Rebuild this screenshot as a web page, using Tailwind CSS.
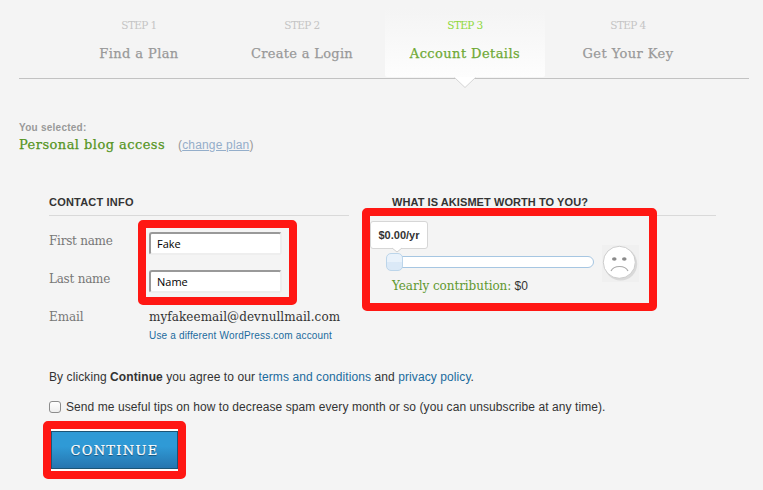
<!DOCTYPE html>
<html lang="en">
<head>
<meta charset="utf-8">
<title>Akismet – Account Details</title>
<script src="https://cdn.jsdelivr.net/npm/@tailwindcss/browser@4"></script>
</head>
<body class="bg-[#f4f4f4]">
<div class="relative w-[763px] h-[490px] overflow-hidden bg-[#f4f4f4] pl-[19px] font-['Liberation_Sans',Arial,sans-serif] text-[12px] text-[#333] whitespace-nowrap">

  <!-- Step navigation -->
  <nav class="flex gap-[3px] w-[730px] h-[79px] pl-[40px] pt-[8px] border-b border-[#c2c2c2] text-center font-['DejaVu_Serif',serif] text-[#999]">
    <div class="w-[160px] pt-[9px]">
      <div class="text-[10.5px] leading-[16px] tracking-[-0.6px] text-[#c4c4c4]">STEP 1</div>
      <div class="mt-[11px] text-[13px] leading-[20px] tracking-[0.4px] [-webkit-text-stroke:0.25px]">Find a Plan</div>
    </div>
    <div class="w-[160px] pt-[9px]">
      <div class="text-[10.5px] leading-[16px] tracking-[-0.6px] text-[#c4c4c4]">STEP 2</div>
      <div class="mt-[11px] text-[13px] leading-[20px] tracking-[0.3px] [-webkit-text-stroke:0.25px]">Create a Login</div>
    </div>
    <div class="relative w-[160px] h-[69px] pt-[9px] rounded-[2px] bg-linear-to-b from-[#f4f4f4] to-[#fdfdfd]">
      <div class="text-[10.5px] leading-[16px] tracking-[-0.6px] text-[#8fd83c]">STEP 3</div>
      <div class="mt-[11px] text-[13px] leading-[20px] tracking-[0.42px] [-webkit-text-stroke:0.25px] text-[#6fa935]">Account Details</div>
      <svg class="absolute left-[69px] top-[69px]" width="22" height="12" viewBox="0 0 22 12"><path d="M0 0H22L11 10.5Z" fill="#fff"/><path d="M.5 .5L11 10.5L21.5 .5" fill="none" stroke="#d4d4d4"/></svg>
    </div>
    <div class="w-[160px] pt-[9px]">
      <div class="text-[10.5px] leading-[16px] tracking-[-0.6px] text-[#c4c4c4]">STEP 4</div>
      <div class="mt-[11px] text-[13px] leading-[20px] tracking-[0.42px] [-webkit-text-stroke:0.25px]">Get Your Key</div>
    </div>
  </nav>

  <!-- Selected plan -->
  <section class="pt-[42px] h-[116px]">
    <div class="text-[10px] leading-[14px] font-bold tracking-[0.25px] text-[#999]">You selected:</div>
    <div class="flex leading-[20px]">
      <div class="w-[159px] font-['DejaVu_Serif',serif] text-[13px] tracking-[0.45px] [-webkit-text-stroke:0.25px] text-[#56951f]">Personal blog access</div>
      <div class="tracking-[0.17px] text-[#999]">(<a class="underline text-[#94aeca]">change plan</a>)</div>
    </div>
  </section>

  <div class="flex pl-[30px] h-[169px]">
    <!-- Contact info -->
    <section class="w-[300px] mr-[43px]">
      <h2 class="h-[21px] border-b border-[#d9d9d9] text-[11px] leading-[15px] font-bold tracking-[0.2px]">CONTACT INFO</h2>
      <div class="flex mt-[15px] h-[38px]">
        <label class="w-[100px] font-['DejaVu_Serif',serif] text-[12px] leading-[20px] tracking-[-0.25px] text-[#777]">First name</label>
        <div class="mt-[1px] w-[133px] h-[23px] rounded-[3px] border-2 border-t-[#999] border-l-[#999] border-r-[#eee] border-b-[#eee] bg-white pl-[6px] font-['Open_Sans',sans-serif] text-[11px] leading-[20px] text-black">Fake</div>
      </div>
      <div class="flex h-[38px]">
        <label class="w-[100px] font-['DejaVu_Serif',serif] text-[12px] leading-[20px] tracking-[-0.25px] text-[#777]">Last name</label>
        <div class="mt-[1px] w-[133px] h-[23px] rounded-[3px] border-2 border-t-[#999] border-l-[#999] border-r-[#eee] border-b-[#eee] bg-white pl-[6px] font-['Open_Sans',sans-serif] text-[11px] leading-[20px] text-black">Name</div>
      </div>
      <div class="flex">
        <div class="w-[100px] font-['DejaVu_Serif',serif] text-[12px] leading-[20px] tracking-[-0.1px] text-[#777]">Email</div>
        <div>
          <div class="font-['DejaVu_Serif',serif] text-[12px] leading-[20px] tracking-[0.06px]">myfakeemail@devnullmail.com</div>
          <a class="block mt-px text-[10px] leading-[16px] tracking-[0.18px] text-[#1b6b9d]">Use a different WordPress.com account</a>
        </div>
      </div>
    </section>

    <!-- Contribution -->
    <section class="w-[324px]">
      <h2 class="h-[21px] border-b border-[#d9d9d9] text-[11px] leading-[15px] font-bold tracking-[0.07px]">WHAT IS AKISMET WORTH TO YOU?</h2>
      <div class="flex">
        <div class="w-[210px] pt-[40px]">
          <div class="relative w-[202px] h-[12px] rounded-[6px] border border-[#a6c6e2] bg-white">
            <div class="absolute left-[-7px] top-[-4px] w-[17px] h-[18px] rounded-[5px] border border-[#bcd5ea] bg-linear-to-b from-[#e9f2fb] from-50% to-[#dbe9f7] to-50%"></div>
            <div class="absolute left-[-23px] top-[-36px] w-[58px] h-[28px] rounded-[3px] border border-[#d6d6d6] bg-white text-center text-[11px] leading-[27px] font-bold">$0.00/yr
              <svg class="absolute left-[21px] top-[25px]" width="10" height="6" viewBox="0 0 10 6"><path d="M0 0H10V1L5 5L0 1Z" fill="#fff"/><path d="M0 1L5 5L10 1" fill="none" stroke="#d0d0d0"/></svg>
            </div>
          </div>
          <div class="mt-[8px] leading-[20px]"><span class="font-['DejaVu_Serif',serif] text-[12px] tracking-[-0.06px] text-[#60982f]">Yearly contribution:</span> $0</div>
        </div>
        <svg class="mt-[29px]" width="37" height="37" viewBox="0 0 37 37">
          <rect width="37" height="37" fill="#f0f0f0"/>
          <circle cx="18.7" cy="19" r="16.5" fill="#d9d9d9"/>
          <circle cx="17.3" cy="17.3" r="16" fill="#fff" stroke="#cdcdcd"/>
          <ellipse cx="12.3" cy="14" rx="2.3" ry="1.8" fill="#8b8b8b"/>
          <ellipse cx="22.3" cy="14" rx="2.3" ry="1.8" fill="#8b8b8b"/>
          <path d="M9 26C12 20 23 20 26 26" fill="none" stroke="#aaa" stroke-width="1.2"/>
        </svg>
      </div>
    </section>
  </div>

  <!-- Terms and submit -->
  <section class="pl-[30px] pt-[3px]">
    <p class="leading-[20px] tracking-[0.09px]">By clicking <b>Continue</b> you agree to our <a class="text-[#1b6b9d]">terms and conditions</a> and <a class="text-[#1b6b9d]">privacy policy</a>.</p>
    <label class="flex items-center mt-[10px] h-[20px]">
      <span class="w-[12px] h-[12px] mr-[5px] rounded-[3px] border border-[#8c8c8c] bg-linear-to-b from-white to-[#eee]"></span>
      <span class="tracking-[0.075px]">Send me useful tips on how to decrease spam every month or so (you can unsubscribe at any time).</span>
    </label>
    <div class="mt-[12px] ml-[2px] w-[127px] h-[42px] bg-white py-[2px]">
      <div class="h-[38px] border border-[#1c5475] bg-linear-to-b from-[#2f9ad6] from-40% to-[#2675af] text-center font-['DejaVu_Serif',serif] text-[13px] leading-[37px] tracking-[1.3px] [-webkit-text-stroke:0.2px] text-white text-shadow-[0_1px_1px_#174c70]">CONTINUE</div>
    </div>
  </section>

  <!-- Highlight frames -->
  <div class="absolute left-[138px] top-[220px] w-[159px] h-[85px] rounded-[5px] border-8 border-[#ff1713]"></div>
  <div class="absolute left-[362px] top-[208px] w-[295px] h-[103px] rounded-[5px] border-8 border-[#ff1713]"></div>
  <div class="absolute left-[43px] top-[421px] w-[143px] h-[58px] rounded-[5px] border-8 border-[#ff1713]"></div>
</div>
</body>
</html>
